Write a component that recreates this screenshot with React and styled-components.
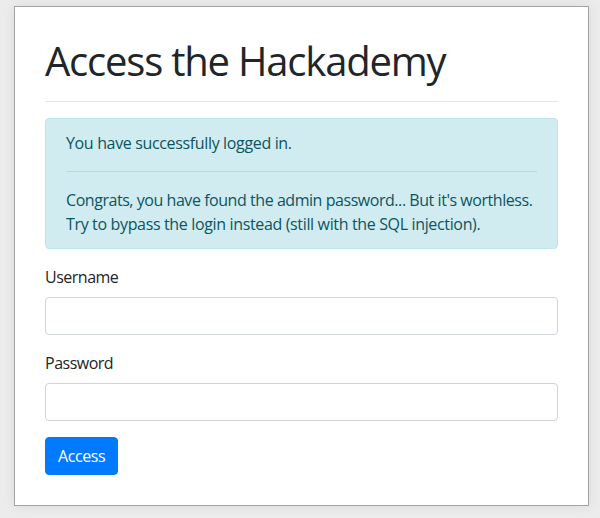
import React from "react";
import styled, { createGlobalStyle } from "styled-components";

const Global = createGlobalStyle`
  html, body { margin: 0; padding: 0; }
  body {
    background: #ececec;
    font-family: "Open Sans", "Noto Sans", sans-serif;
    color: #212529;
    font-size: 16px;
    line-height: 24px;
  }
  * { box-sizing: border-box; }
`;

const Page = styled.div`
  padding: 6px 11px 13px 14px;
`;

const Card = styled.div`
  width: 575px;
  background: #fff;
  border: 1px solid #a3a3a3;
  box-shadow: 0 0 12px rgba(0, 0, 0, 0.08);
  padding: 30px;
`;

const Title = styled.h1`
  margin: 0;
  font-size: 40px;
  font-weight: 400;
  line-height: 48px;
  letter-spacing: -1.2px;
`;

const Rule = styled.hr`
  margin: 16px 0;
  border: 0;
  border-top: 1px solid ${(p) => p.$color || "rgba(0,0,0,0.1)"};
  height: 0;
`;

const Alert = styled.div`
  background: #d1ecf1;
  border: 1px solid #bee5eb;
  color: #0c5460;
  border-radius: 4px;
  padding: 12px 20px;
  margin-bottom: 16px;
  letter-spacing: -0.35px;
`;

const Para = styled.p`
  margin: 0;
`;

const Line = styled.span`
  display: block;
  white-space: nowrap;
  letter-spacing: ${(p) => p.$spacing || "-0.35px"};
`;

const Group = styled.div`
  display: flex;
  flex-direction: column;
  margin-bottom: 16px;
`;

const Label = styled.label`
  margin-bottom: 8px;
  letter-spacing: -0.5px;
`;

const Input = styled.input`
  height: 38px;
  width: 100%;
  border: 1px solid #ced4da;
  border-radius: 4px;
  padding: 6px 12px;
  font: inherit;
  outline: none;
`;

const Button = styled.button`
  height: 38px;
  padding: 6px 12px;
  background: #007bff;
  color: #fff;
  border: 1px solid #007bff;
  border-radius: 4px;
  font: inherit;
  letter-spacing: -0.4px;
  display: block;
`;

export default function App() {
  return (
    <>
      <Global />
      <Page>
        <Card>
          <Title>Access the Hackademy</Title>
          <Rule />
          <Alert>
            <Para>You have successfully logged in.</Para>
            <Rule $color="#abdde5" />
            <Para>
              <Line $spacing="-0.45px">
                Congrats, you have found the admin password... But it's worthless.
              </Line>
              <Line>Try to bypass the login instead (still with the SQL injection).</Line>
            </Para>
          </Alert>
          <Group>
            <Label htmlFor="u">Username</Label>
            <Input id="u" type="text" />
          </Group>
          <Group>
            <Label htmlFor="p">Password</Label>
            <Input id="p" type="password" />
          </Group>
          <Button>Access</Button>
        </Card>
      </Page>
    </>
  );
}
